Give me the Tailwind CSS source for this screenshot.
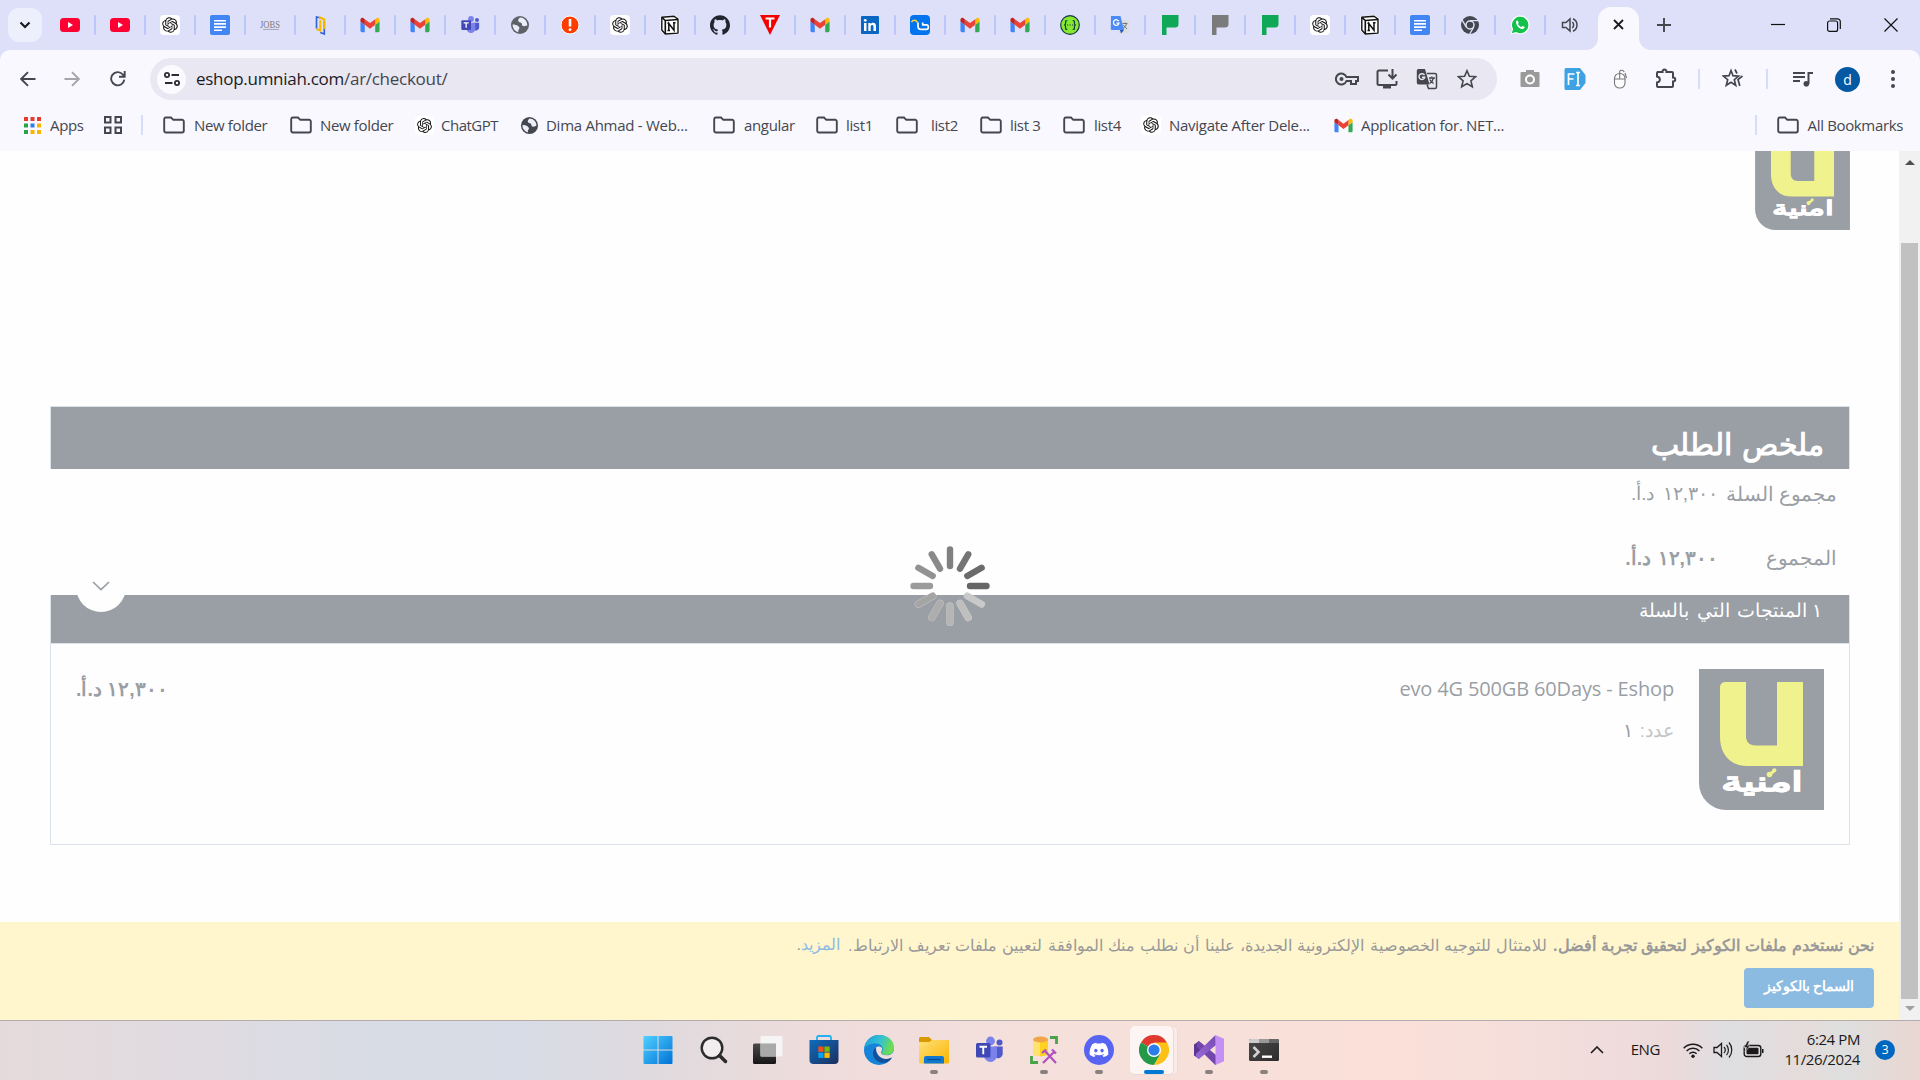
<!DOCTYPE html>
<html lang="en">
<head>
<meta charset="utf-8">
<title>eshop.umniah.com</title>
<script src="https://cdn.jsdelivr.net/npm/@tailwindcss/browser@4"></script>
</head>
<body class="w-[1920px] h-[1080px] overflow-hidden bg-white font-['Open_Sans',sans-serif]">
<svg class="absolute size-0" aria-hidden="true">
<defs>
<linearGradient id="gwin" x1="0" y1="0" x2="1" y2="1"><stop offset="0" stop-color="#4fd0ff"/><stop offset="1" stop-color="#0072d6"/></linearGradient>
<linearGradient id="gfold" x1="0" y1="0" x2="1" y2="1"><stop offset="0" stop-color="#ffe17a"/><stop offset="1" stop-color="#fbb400"/></linearGradient>
<linearGradient id="gdark" x1="0" y1="0" x2="0" y2="1"><stop offset="0" stop-color="#4a4a4a"/><stop offset="1" stop-color="#161616"/></linearGradient>
<linearGradient id="gterm" x1="0" y1="0" x2="1" y2="1"><stop offset="0" stop-color="#4a4a4a"/><stop offset="1" stop-color="#2c2c2c"/></linearGradient>
<linearGradient id="gstore" x1="0" y1="0" x2="1" y2="1"><stop offset="0" stop-color="#0f6cbd"/><stop offset="1" stop-color="#1b2f5f"/></linearGradient>
<linearGradient id="gedge" x1="0" y1="0" x2="1" y2="0.3"><stop offset="0" stop-color="#1b9de0"/><stop offset=".6" stop-color="#35c3cf"/><stop offset="1" stop-color="#6ddc4f"/></linearGradient>
<linearGradient id="gvs" x1="0" y1="1" x2="1" y2="0"><stop offset="0" stop-color="#9a6bd8"/><stop offset="1" stop-color="#7848b4"/></linearGradient>
</defs>
</svg>
<svg class="hidden" aria-hidden="true">
<symbol id="yt" viewBox="0 0 20 20"><rect x="0" y="3" width="20" height="14" rx="3.5" fill="#ff0033"/><path d="M8 7v6l5-3z" fill="#fff"/></symbol>
<symbol id="gpt" viewBox="0 0 20 20"><rect width="20" height="20" rx="4" fill="#fff"/><path transform="translate(2.2 2.2) scale(.65)" fill="#111" d="M22.2819 9.8211a5.9847 5.9847 0 0 0-.5157-4.9108 6.0462 6.0462 0 0 0-6.5098-2.9A6.0651 6.0651 0 0 0 4.9807 4.1818a5.9847 5.9847 0 0 0-3.9977 2.9 6.0462 6.0462 0 0 0 .7427 7.0966 5.98 5.98 0 0 0 .511 4.9107 6.051 6.051 0 0 0 6.5146 2.9001A5.9847 5.9847 0 0 0 13.2599 24a6.0557 6.0557 0 0 0 5.7718-4.2058 5.9894 5.9894 0 0 0 3.9977-2.9001 6.0557 6.0557 0 0 0-.7475-7.0729zm-9.022 12.6081a4.4755 4.4755 0 0 1-2.8764-1.0408l.1419-.0804 4.7783-2.7582a.7948.7948 0 0 0 .3927-.6813v-6.7369l2.02 1.1686a.071.071 0 0 1 .038.052v5.5826a4.504 4.504 0 0 1-4.4945 4.4944zm-9.6607-4.1254a4.4708 4.4708 0 0 1-.5346-3.0137l.142.0852 4.783 2.7582a.7712.7712 0 0 0 .7806 0l5.8428-3.3685v2.3324a.0804.0804 0 0 1-.0332.0615L9.74 19.9502a4.4992 4.4992 0 0 1-6.1408-1.6464zM2.3408 7.8956a4.485 4.485 0 0 1 2.3655-1.9728V11.6a.7664.7664 0 0 0 .3879.6765l5.8144 3.3543-2.0201 1.1685a.0757.0757 0 0 1-.071 0l-4.8303-2.7865A4.504 4.504 0 0 1 2.3408 7.872zm16.5963 3.8558L13.1038 8.364 15.1192 7.2a.0757.0757 0 0 1 .071 0l4.8303 2.7913a4.4944 4.4944 0 0 1-.6765 8.1042v-5.6772a.79.79 0 0 0-.407-.667zm2.0107-3.0231l-.142-.0852-4.7735-2.7818a.7759.7759 0 0 0-.7854 0L9.409 9.2297V6.8974a.0662.0662 0 0 1 .0284-.0615l4.8303-2.7866a4.4992 4.4992 0 0 1 6.6802 4.66zM8.3065 12.863l-2.02-1.1638a.0804.0804 0 0 1-.038-.0567V6.0742a4.4992 4.4992 0 0 1 7.3757-3.4537l-.142.0805L8.704 5.459a.7948.7948 0 0 0-.3927.6813zm1.0976-2.3654l2.602-1.4998 2.6069 1.4998v2.9994l-2.5974 1.4997-2.6067-1.4997Z"/></symbol>
<symbol id="docs" viewBox="0 0 20 20"><rect width="20" height="20" rx="2" fill="#4285f4"/><path d="M4 5.700h12M4 8.900h12M4 12.100h12M4 15.300h8" stroke="#fff" stroke-width="1.600"/></symbol>
<symbol id="jobs" viewBox="0 0 20 20"><text x="0" y="12.500" font-family="Liberation Serif" font-size="10" textLength="20" lengthAdjust="spacingAndGlyphs" fill="#7f7b7b">JOBS</text><path d="M3 14.500h16" stroke="#aaa7b8" stroke-width="1"/></symbol>
<symbol id="book" viewBox="0 0 20 20"><path d="M6.500 13.500V2L11 3" fill="none" stroke="#2f5fd0" stroke-width="1.600"/><path d="M14.300 6v13l-4-1.500" fill="none" stroke="#2f5fd0" stroke-width="1.600"/><path d="M6.500 14l3.800 1.500V5M9 2l5.300 2.500V14" fill="none" stroke="#f5b700" stroke-width="2"/></symbol>
<symbol id="gmail" viewBox="50 36 92 78"><path fill="#4285f4" d="M58 108h14V74L52 59v43c0 3.320 2.690 6 6 6"/><path fill="#34a853" d="M120 108h14c3.320 0 6-2.690 6-6V59l-20 15"/><path fill="#fbbc04" d="M120 48v26l20-15v-8c0-7.420-8.470-11.650-14.400-7.200"/><path fill="#ea4335" d="M72 74V48l24 18 24-18v26L96 92"/><path fill="#c5221f" d="M52 51v8l20 15V48l-5.600-4.200c-5.940-4.450-14.400-.220-14.400 7.200"/></symbol>
<symbol id="teams" viewBox="0 0 30 30"><circle cx="16.500" cy="6" r="4.400" fill="#7b83eb"/><circle cx="25.500" cy="7.500" r="3" fill="#5059c9"/><path d="M20 11.500h8.700v8a5 5 0 0 1-8.700 2z" fill="#5059c9"/><path d="M10 11.500h13v9a6.500 6.500 0 0 1-13 0z" fill="#7b83eb"/><rect x="2" y="8" width="14.500" height="14.500" rx="1.500" fill="#4048b5"/><path d="M5.500 11.800h7.500M9.250 11.800v7.400" stroke="#fff" stroke-width="1.900"/></symbol>
<symbol id="globe" viewBox="0 0 20 20"><circle cx="10" cy="10" r="9" fill="currentColor"/><path d="M10 2.500c-2 1.500-2.500 3.500-1 4.500 1.800.8 3 .5 3 2.500 0 1.500 1.500 2 2.800 1.500 1.600-.6 2.500 0 2.500-1A7.500 7.500 0 0 0 10 2.500zM2.600 9.500c2 0 4 .5 5.500 1.500 1.500 1.200 1.800 2.600.7 3.500-.8.800-.5 1.600-.3 2.800A7.500 7.500 0 0 1 2.600 9.500z" fill="#eceefb"/></symbol>
<symbol id="alert" viewBox="0 0 20 20"><circle cx="10" cy="10" r="9" fill="#ff3d00" stroke="#fff" stroke-width="1"/><path d="M10 4v7.500" stroke="#fff" stroke-width="2.600"/><circle cx="10" cy="14.700" r="1.400" fill="#fff"/></symbol>
<symbol id="notion" viewBox="0 0 20 20"><path d="M.5 1.500L14 0l5.500 3.500V19L5 20 .5 15.500z" fill="#fff"/><path d="M1.800 2.300L14 1.300l4 2.800v14L5.300 19l-3.500-4z" fill="#fff" stroke="#111" stroke-width="1.400" stroke-linejoin="round"/><path d="M1.800 2.300L5.300 5.500 18 4.500M5.300 5v14" fill="none" stroke="#111" stroke-width="1.600"/><path d="M8.800 15.300V8.500l5.200 6.800V7.800M7.500 8.300h2M13 7.800h2.500M7.500 15.500h2.500" fill="none" stroke="#111" stroke-width="1.500"/></symbol>
<symbol id="github" viewBox="0 0 24 24"><path fill="#20262e" d="M12 .297c-6.630 0-12 5.373-12 12 0 5.303 3.438 9.800 8.205 11.385.6.113.820-.258.820-.577 0-.285-.010-1.040-.015-2.040-3.338.724-4.042-1.610-4.042-1.610C4.422 18.070 3.633 17.700 3.633 17.700c-1.087-.744.084-.729.084-.729 1.205.084 1.838 1.236 1.838 1.236 1.070 1.835 2.809 1.305 3.495.998.108-.776.417-1.305.760-1.605-2.665-.3-5.466-1.332-5.466-5.930 0-1.310.465-2.380 1.235-3.220-.135-.303-.540-1.523.105-3.176 0 0 1.005-.322 3.300 1.230.960-.267 1.980-.399 3-.405 1.020.006 2.040.138 3 .405 2.280-1.552 3.285-1.230 3.285-1.230.645 1.653.240 2.873.120 3.176.765.840 1.230 1.910 1.230 3.220 0 4.610-2.805 5.625-5.475 5.920.420.360.810 1.096.810 2.220 0 1.606-.015 2.896-.015 3.286 0 .315.210.690.825.570C20.565 22.092 24 17.592 24 12.297c0-6.627-5.373-12-12-12"/></symbol>
<symbol id="tri" viewBox="0 0 20 20"><path d="M0 0h20L10 20z" fill="#f40000"/><path d="M5.500 3.500h9M10 3.500v9" stroke="#fff" stroke-width="2.200"/></symbol>
<symbol id="linkedin" viewBox="0 0 20 20"><rect x="1" y="1" width="18" height="18" rx="1" fill="#0a66c2"/><path d="M4 8h2.500v8H4zM8.300 8h2.300v1.200C11 8.400 12 7.800 13 7.800c2.400 0 3 1.500 3 3.700V16h-2.500v-4c0-1-.1-2.100-1.300-2.100S10.700 11 10.700 12v4H8.300z" fill="#fff"/><circle cx="5.250" cy="5.300" r="1.400" fill="#fff"/></symbol>
<symbol id="wave" viewBox="0 0 20 20"><rect width="20" height="20" rx="4" fill="#0073ee"/><path d="M1.500 7c2-2.500 4-2 6 .2" fill="none" stroke="#ffd43b" stroke-width="1.500"/><path d="M8 7.500v4c0 1.800 1 2.800 2.800 2.800h5.700a1.800 1.800 0 0 0 1.800-1.800v-.8a1.800 1.800 0 0 0-1.800-1.800h-3.800V7.500" fill="none" stroke="#fff" stroke-width="1.700"/></symbol>
<symbol id="swagger" viewBox="0 0 20 20"><circle cx="10" cy="10" r="9.300" fill="#85ea2d" stroke="#173647" stroke-width="1.200"/><path d="M7.300 5.500c-2 0-1.800 1-1.700 2.500.1 1.200-.3 1.900-1.400 2 1.100.1 1.500.8 1.400 2-.1 1.500-.3 2.500 1.700 2.500M12.700 5.500c2 0 1.800 1 1.700 2.500-.1 1.200.3 1.900 1.400 2-1.100.1-1.500.8-1.400 2 .1 1.500.3 2.500-1.700 2.500M7 10h1.200M9.500 10h1.200M12 10h1.200" fill="none" stroke="#173647" stroke-width="1.200"/></symbol>
<symbol id="gtr" viewBox="0 0 20 20"><rect x="8" y="5" width="11" height="13.500" rx="1" fill="#dcdde2"/><path d="M1 1h9.500l3.500 14H2a1.200 1.200 0 0 1-1.200-1.200z" fill="#4c8bf5"/><path d="M10 15h4l-3 3.500z" fill="#2b50b5"/><path d="M8.800 6.300A2.800 2.800 0 1 0 9 8.200H6.400" fill="none" stroke="#fff" stroke-width="1.300"/><path d="M12.500 8.500h5M15 7.500v1M16.500 8.500c-.5 2.500-2 4-3.500 5M13.500 10c.7 1.500 2 3 3.500 3.800" fill="none" stroke="#6f7680" stroke-width="1"/></symbol>
<symbol id="pflag" viewBox="0 0 20 20"><path d="M2 0h16.500v9a3.500 3.500 0 0 1-3.500 3.500H6.500V20H2z" fill="currentColor"/></symbol>
<symbol id="chromebw" viewBox="0 0 20 20"><circle cx="10" cy="10" r="9" fill="#44474e"/><circle cx="10" cy="10" r="4" fill="#44474e" stroke="#dfe0fa" stroke-width="1.500"/><path d="M10 5.700h8.200M6.300 12.200L2.200 5.200M13.700 12.200L9.700 19" stroke="#dfe0fa" stroke-width="1.300"/></symbol>
<symbol id="wa" viewBox="0 0 20 20"><path d="M.5 19.500l1.700-5A9.400 9.400 0 1 1 5.700 18z" fill="#fff"/><path d="M1.800 18.300l1.300-4.200A8.200 8.200 0 1 1 6 17z" fill="#12c24b"/><path d="M6.400 5.700c.6-.5 1.200-.4 1.500.2l.8 1.600c.2.500-.7 1.100-.7 1.400.7 1.400 1.900 2.500 3.300 3 .4 0 1-1.100 1.500-.9l1.500.8c.6.4.3 1.300-.3 1.800-3 2.200-9.500-3.700-7.600-7.900z" fill="#fff"/></symbol>
<symbol id="spk" viewBox="0 0 20 20"><path d="M2.500 7.500H6l4-3.500v12l-4-3.500H2.500z" fill="none" stroke="#44474e" stroke-width="1.500"/><path d="M12.300 7a4 4 0 0 1 0 6M13 3.800a6.800 6.800 0 0 1 0 12.400" fill="none" stroke="#44474e" stroke-width="1.500"/></symbol>
<symbol id="folder" viewBox="0 0 22 18"><path d="M1.200 3A1.700 1.700 0 0 1 2.900 1.500H8l2.300 2.300h8.800A1.700 1.700 0 0 1 20.800 5.500v9.300a1.700 1.700 0 0 1-1.700 1.700H2.900a1.700 1.700 0 0 1-1.700-1.700z" fill="none" stroke="#44474e" stroke-width="1.900"/></symbol>
<symbol id="star" viewBox="0 0 20 20"><path d="M10 1.700l2.400 5.600 6.100.5-4.600 4 1.400 6-5.300-3.200-5.300 3.200 1.400-6-4.600-4 6.100-.5z" fill="none" stroke="currentColor" stroke-width="1.600" stroke-linejoin="miter"/></symbol>
<symbol id="ulogo" viewBox="0 0 125 141">
<path d="M0 0h125v141H27a27 27 0 0 1-27-27z" fill="#9a9ea5"/>
<path d="M26 13h21v54c0 6 3.500 9.500 9.500 9.500H78V13h26v84H48c-16 0-27-11-27-29V18a5 5 0 0 1 5-5z" fill="#f0f28e"/>
<text x="105" y="121.500" direction="rtl" font-family="sans-serif" font-weight="700" font-size="27" fill="#fff" stroke="#fff" stroke-width=".6" textLength="83" lengthAdjust="spacingAndGlyphs">امنية</text>
<path d="M70 106l5-4" stroke="#f0f28e" stroke-width="3"/><circle cx="70.500" cy="105.500" r="2.800" fill="#f0f28e"/><circle cx="75.300" cy="101.300" r="2.100" fill="#f0f28e"/>
</symbol>
</svg>

<!-- Tab strip -->
<header class="flex h-[50px] bg-[#dee0fa]">
  <div class="flex w-[46px] shrink-0 items-center pl-2">
    <div class="flex h-[34px] w-[34px] items-center justify-center rounded-[11px] bg-[#eeeffd]"><svg class="size-4" viewBox="0 0 16 16"><path d="M3.500 5.500L8 10l4.500-4.500" fill="none" stroke="#1b1b1f" stroke-width="2.200"/></svg></div>
  </div>
  <div id="tabs" class="flex w-[1552px] shrink-0"></div>
  <div class="relative mt-[7px] flex h-[43px] w-[41px] items-center justify-center rounded-t-[13px] bg-[#f9f8fe] pb-2">
    <svg class="absolute bottom-0 -left-3 size-3" viewBox="0 0 12 12"><path d="M12 0v12H0A12 12 0 0 0 12 0z" fill="#f9f8fe"/></svg>
    <svg class="absolute bottom-0 -right-3 size-3" viewBox="0 0 12 12"><path d="M0 0v12h12A12 12 0 0 1 0 0z" fill="#f9f8fe"/></svg>
    <svg class="size-[11px]" viewBox="0 0 11 11"><path d="M1 1l9 9M10 1l-9 9" stroke="#1b1b1f" stroke-width="1.800"/></svg>
  </div>
  <div class="flex w-[49px] items-center justify-center"><svg class="size-[14px]" viewBox="0 0 14 14"><path d="M7 0v14M0 7h14" stroke="#44474e" stroke-width="1.900"/></svg></div>
  <div class="ml-auto flex items-center">
    <div class="flex w-14 justify-center"><svg class="h-[14px] w-[14px]" viewBox="0 0 14 14"><path d="M0 6.500h14" stroke="#111" stroke-width="1.200"/></svg></div>
    <div class="flex w-14 justify-center"><svg class="h-[14px] w-[14px]" viewBox="0 0 14 14"><rect x=".6" y="3" width="10" height="10.400" rx="2" fill="none" stroke="#111" stroke-width="1.200"/><path d="M3 .8h7.500a2.800 2.800 0 0 1 2.800 2.800V11" fill="none" stroke="#111" stroke-width="1.200"/></svg></div>
    <div class="flex w-[58px] justify-center"><svg class="size-[14px]" viewBox="0 0 14 14"><path d="M.5.5l13 13M13.500.5l-13 13" stroke="#111" stroke-width="1.200"/></svg></div>
  </div>
</header>

<!-- Toolbar -->
<div class="bg-[#dee0fa]">
<div class="flex h-[58px] items-center rounded-t-[10px] bg-[#f9f8fe]">
  <div class="flex w-[45px] justify-center pl-[10px]"><svg class="size-4" viewBox="0 0 16 16"><path d="M15.500 8H1.500M8 1.200L1.200 8 8 14.800" fill="none" stroke="#44474e" stroke-width="1.900"/></svg></div>
  <div class="flex w-[50px] justify-center pl-1"><svg class="size-4" viewBox="0 0 16 16"><path d="M.5 8h14M8 1.200L14.800 8 8 14.800" fill="none" stroke="#a5a6ac" stroke-width="1.900"/></svg></div>
  <div class="flex w-[45px] justify-center"><svg class="size-4" viewBox="0 0 16 16"><path d="M14.300 8.700A6.600 6.600 0 1 1 12.800 3.500L14.500 5.300M14.700 0v5.700H9" fill="none" stroke="#44474e" stroke-width="1.900"/></svg></div>
  <div class="ml-[10px] flex h-[42px] w-[1347px] items-center rounded-full bg-[#e9e7f1] pr-[10px] pl-[7px]">
    <div class="flex size-[29px] items-center justify-center rounded-full bg-[#fbfaff]"><svg class="size-4" viewBox="0 0 16 16"><g fill="none" stroke="#2c2d33" stroke-width="1.800"><circle cx="3" cy="4" r="2.100"/><path d="M7.500 4H15M1 12h7.500"/><circle cx="13" cy="12" r="2.100"/></g></svg></div>
    <div class="ml-[10px] text-[17px] tracking-[-0.28px] text-[#1b1b1f]">eshop.umniah.com<span class="text-[#44464f]">/ar/checkout/</span></div>
    <div class="ml-auto flex text-[#44474e]">
      <div class="flex w-10 items-center justify-center"><svg class="h-[14px] w-6" viewBox="0 0 24 14"><g fill="none" stroke="#44474e" stroke-width="2"><path d="M11.500 5H23v4h-2v3h-5V9h-4.500A5.500 5.500 0 1 1 11.500 5z"/></g><circle cx="6.500" cy="7" r="2" fill="#44474e"/></svg></div>
      <div class="flex w-10 items-center justify-center"><svg class="size-[22px]" viewBox="0 0 22 22"><path d="M12 2.500H3A1.500 1.500 0 0 0 1.500 4v11.500A1.500 1.500 0 0 0 3 17h16a1.500 1.500 0 0 0 1.500-1.500V13M16.500 1v9M12.500 6.500l4 4 4-4" fill="none" stroke="#44474e" stroke-width="2"/><path d="M7 17h8v3.500H7z" fill="#44474e"/></svg></div>
      <div class="flex w-10 items-center justify-center"><svg class="size-[22px]" viewBox="0 0 22 22"><path d="M2.500 1H9l4.500 15.500h-11A1.800 1.800 0 0 1 .8 14.700V2.800A1.800 1.800 0 0 1 2.500 1z" fill="#44474e"/><path d="M11 5.500h8a1.500 1.500 0 0 1 1.500 1.500v12a1.500 1.500 0 0 1-1.500 1.500h-6.500L11 16.500" fill="none" stroke="#44474e" stroke-width="1.500"/><path d="M8.500 7.200A2.900 2.900 0 1 0 8.800 9.200H6" fill="none" stroke="#e9e7f1" stroke-width="1.400"/><path d="M13 10h6M15.800 8.500V10M17.500 10c-.5 2.500-2 4.200-4 5.500M13.800 11.500c.8 1.700 2 3 3.800 4" fill="none" stroke="#44474e" stroke-width="1.300"/></svg></div>
      <div class="flex w-10 items-center justify-center"><svg class="size-5"><use href="#star"/></svg></div>
    </div>
  </div>
  <div class="ml-[10px] flex text-[#44474e]">
    <div class="flex w-[45px] items-center justify-center"><svg class="size-5" viewBox="0 0 20 20"><path d="M6 3V1h8v2h4.500a1 1 0 0 1 1 1v13a1 1 0 0 1-1 1h-17a1 1 0 0 1-1-1V4a1 1 0 0 1 1-1z" fill="#9a9a9a"/><circle cx="10" cy="10.500" r="4" fill="#9a9a9a" stroke="#fff" stroke-width="2"/></svg></div>
    <div class="flex w-[45px] items-center justify-center"><svg class="h-[22px] w-[22px]" viewBox="0 0 22 22"><path d="M2 0h14l5.500 7v8L16 22H2a1.500 1.500 0 0 1-1.500-1.500v-19A1.500 1.500 0 0 1 2 0z" fill="#3fa2e2"/><path d="M4.500 17V6h6M4.500 11h5M14 5v12M12 4.500h4M12 17.500h4" fill="none" stroke="#fff" stroke-width="1.700"/></svg></div>
    <div class="flex w-[45px] items-center justify-center"><svg class="size-5" viewBox="0 0 20 20"><rect x="4.500" y="4.500" width="10.500" height="14.500" rx="5" fill="#fff" stroke="#777" stroke-width="1.100"/><path d="M4.500 10H15M9.700 10V2.500c0-2 4-1.500 4.500.5M15 4l1.500 5" fill="none" stroke="#777" stroke-width="1.100"/></svg></div>
    <div class="flex w-[47px] items-center justify-center"><svg class="size-[22px]" viewBox="0 0 22 22"><path d="M2 4h5.500C7 .8 12 .8 11.500 4H17a1 1 0 0 1 1 1v4.500c3 0 3 4 0 4V18a1 1 0 0 1-1 1H3a1 1 0 0 1-1-1v-3.500c3.800-.5 3.800-5.500 0-6V5a1 1 0 0 1 1-1z" fill="none" stroke="#44474e" stroke-width="2"/></svg></div>
  </div>
  <div class="ml-[9px] h-5 w-[2px] bg-[#d6ddfb]"></div>
  <div class="flex w-[66px] justify-center text-[#44474e]"><svg class="size-[22px]" viewBox="0 0 22 22"><path d="M9 2.500l2 5.200 5.500.4-4.200 3.600 1.400 5.600L9 14.200l-4.700 3.100 1.400-5.600L1.500 8.100l5.500-.4z" fill="none" stroke="#44474e" stroke-width="1.700"/><path d="M13 1.500l2 4M20.500 8l-4.500 3.500 1.800 6.500" fill="none" stroke="#44474e" stroke-width="1.700"/></svg></div>
  <div class="h-5 w-[2px] bg-[#d6ddfb]"></div>
  <div class="flex w-[67px] justify-center pl-[2px]"><svg class="h-4 w-5" viewBox="0 0 20 16"><path d="M0 2h12M0 6h12M0 10h7" stroke="#44474e" stroke-width="2"/><path d="M15.500 13V2H20" fill="none" stroke="#44474e" stroke-width="2"/><circle cx="13.300" cy="12.700" r="2.800" fill="#44474e"/></svg></div>
  <div class="flex size-[25px] items-center justify-center rounded-full bg-[#0459a4] text-[14px] text-white">d</div>
  <div class="flex flex-1 justify-center pl-[5px]"><svg class="h-[18px] w-1" viewBox="0 0 4 18"><g fill="#44474e"><circle cx="2" cy="2" r="2"/><circle cx="2" cy="9" r="2"/><circle cx="2" cy="16" r="2"/></g></svg></div>
</div>
</div>

<!-- Bookmarks bar -->
<nav class="flex h-[43px] items-center bg-[#f9f8fe] pb-[9px] text-[15px] tracking-[-0.35px] whitespace-nowrap text-[#44474e] *:leading-[20px]">
  <div class="flex w-[80px] items-center gap-[9px] pl-6 "><svg class="size-[17px] shrink-0" viewBox="0 0 17 17"><g fill="#e8392d"><path d="M0 0h4v4H0zM6.500 0h4v4h-4zM13 0h4v4h-4z"/></g><path fill="#2aa24c" d="M0 6.500h4v4H0zM0 13h4v4H0z"/><path fill="#2b7de9" d="M6.500 6.500h4v4h-4z"/><path fill="#fbb400" d="M13 6.500h4v4h-4zM6.500 13h4v4h-4zM13 13h4v4h-4z"/></svg><span>Apps</span></div>
  <svg class="ml-6 size-[18px]" viewBox="0 0 18 18"><path d="M1 1h5.500v5.500H1zM11.500 1H17v5.500h-5.500zM1 11.500h5.500V17H1zM11.500 11.500H17V17h-5.500z" fill="none" stroke="#44474e" stroke-width="2"/></svg>
  <div class="ml-[19px] h-5 w-[2px] bg-[#d6ddfb]"></div>
  <div class="ml-5 flex w-[127px] items-center gap-[9px]"><svg class="h-[18px] w-[22px]"><use href="#folder"/></svg>New folder</div>
  <div class="flex w-[125px] items-center gap-[8px]"><svg class="h-[18px] w-[22px]"><use href="#folder"/></svg>New folder</div>
  <div class="flex w-[105px] items-center gap-[7px]"><svg class="size-[19px]"><use href="#gpt"/></svg><span class="tracking-[-0.5px]">ChatGPT</span></div>
  <div class="flex w-[193px] items-center gap-[7px] tracking-[-0.27px]"><svg class="size-[19px]"><use href="#globe"/></svg>Dima Ahmad - Web...</div>
  <div class="flex w-[103px] items-center gap-[9px]"><svg class="h-[18px] w-[22px]"><use href="#folder"/></svg>angular</div>
  <div class="flex w-[80px] items-center gap-[8px]"><svg class="h-[18px] w-[22px]"><use href="#folder"/></svg>list1</div>
  <div class="flex w-[84px] items-center gap-[13px]"><svg class="h-[18px] w-[22px]"><use href="#folder"/></svg>list2</div>
  <div class="flex w-[83px] items-center gap-[8px]"><svg class="h-[18px] w-[22px]"><use href="#folder"/></svg>list 3</div>
  <div class="flex w-[78px] items-center gap-[9px]"><svg class="h-[18px] w-[22px]"><use href="#folder"/></svg>list4</div>
  <div class="flex w-[193px] items-center gap-[8px] tracking-[-0.27px]"><svg class="size-[20px]"><use href="#gpt"/></svg>Navigate After Dele...</div>
  <div class="flex items-center gap-[8px] tracking-[-0.3px]"><svg class="size-[19px]"><use href="#gmail"/></svg>Application for. NET...</div>
  <div class="ml-auto h-5 w-[2px] bg-[#d6ddfb]"></div>
  <div class="ml-5 flex items-center gap-[9px] pr-[17px]"><svg class="h-[18px] w-[22px]"><use href="#folder"/></svg>All Bookmarks</div>
</nav>

<!-- Page viewport -->
<div class="flex h-[869px]">
  <main dir="rtl" class="relative h-full w-[1899px] overflow-hidden bg-[#fefefe] font-[sans-serif] text-[#9a9ea5]">
    <div class="h-[79px] overflow-hidden pr-[49px]"><svg class="-mt-[28px] h-[107px] w-[95px]"><use href="#ulogo"/></svg></div>
    <section class="mr-[49px] mt-[176px] w-[1800px]">
      <h1 class="flex h-[63px] items-end border border-b-0 border-[#dbe2ea] bg-[#9a9ea5] pr-[25px] pb-[4px] text-[29.800px] leading-[40px] font-bold whitespace-nowrap text-white [word-spacing:2px]">ملخص الطلب</h1>
      <div class="flex h-[63px] items-start pt-[10px] pr-[13px] text-[19.500px] leading-[30px]"><span class="w-[108px] whitespace-nowrap">مجموع السلة</span><span class="mr-[11px] text-[19px] whitespace-nowrap [word-spacing:3px]">١٢,٣٠٠ د.أ.</span></div>
      <div class="flex h-[63px] items-start pt-[11px] pr-[13px] text-[19.500px] leading-[30px]"><span class="w-[108px]">المجموع</span><span class="mr-[11px] text-[19.500px] font-bold whitespace-nowrap [word-spacing:1px]">١٢,٣٠٠ د.أ.</span></div>
      <div class="relative h-[49px] border-x border-b border-[#dbe2ea] bg-[#9a9ea5] pt-px pr-[27px] text-[19.200px] leading-[30px] text-white"><span>١</span><span class="mr-[5px] [word-spacing:2px]">المنتجات التي بالسلة</span>
        <div class="absolute -top-[33px] left-[25px] flex size-[50px] items-center justify-center rounded-full bg-[#fefefe]"><svg class="mt-[-2px] h-[10px] w-[18px]" viewBox="0 0 18 10"><path d="M1 1l8 7.500L17 1" fill="none" stroke="#9a9ea5" stroke-width="1.700"/></svg></div>
      </div>
      <div class="flex h-[201px] border border-t-0 border-[#dbe2ea] pt-[25px] pr-[25px] pl-[25px]">
        <svg class="h-[141px] w-[125px]"><use href="#ulogo"/></svg>
        <div class="mr-[25px] pt-[6px]">
          <div dir="ltr" class="font-['Open_Sans'] text-[20px] leading-[28px] tracking-[-0.15px]">evo 4G 500GB 60Days - Eshop</div>
          <div class="mt-[14px] text-[18.500px] leading-[28px]"><span class="text-[#c4c4c4]">عدد:</span><span class="mr-[7px]">١</span></div>
        </div>
        <div class="mr-auto pt-[6px] text-[19.500px] leading-[28px] font-bold">١٢,٣٠٠ د.أ.</div>
      </div>
    </section>
    <footer class="mt-[77px] h-[98px] bg-[#fff6ce] pt-[11px] pr-[25px] text-[16px] leading-[24px] text-[#999999]">
      <p class="flex h-6 gap-[6px] whitespace-nowrap"><strong class="text-[16.200px] [word-spacing:0.4px]">نحن نستخدم ملفات الكوكيز لتحقيق تجربة أفضل.</strong><span class="text-[16.450px] [word-spacing:0.7px]">للامتثال للتوجيه الخصوصية الإلكترونية الجديدة، علينا أن نطلب منك الموافقة لتعيين ملفات تعريف الارتباط.</span><span class="mr-[2px]"><span class="text-[#8cbbe2]">المزيد</span>.</span></p>
      <div class="mt-[11px] flex h-10 w-[130px] items-center justify-center rounded-[4px] bg-[#8cbbe2] pb-[2px] text-[13.800px] font-bold whitespace-nowrap text-white">السماح بالكوكيز</div>
    </footer>
    <svg class="absolute top-[395px] left-[910px] size-20" viewBox="-40 -40 80 80"><g stroke-width="6.400" stroke-linecap="round">
      <path d="M20 0h16.500" stroke="#666"/><path d="M20 0h16.500" stroke="#6b6b6b" transform="rotate(-30)"/><path d="M20 0h16.500" stroke="#747474" transform="rotate(-60)"/><path d="M20 0h16.500" stroke="#808080" transform="rotate(-90)"/><path d="M20 0h16.500" stroke="#8a8a8a" transform="rotate(-120)"/><path d="M20 0h16.500" stroke="#929292" transform="rotate(-150)"/><path d="M20 0h16.500" stroke="#9b9b9b" transform="rotate(180)"/><path d="M20 0h16.500" stroke="#c4c4c4" stroke-width="7.400" transform="rotate(150)"/><path d="M20 0h16.500" stroke="#a5a5a5" transform="rotate(150)"/><path d="M20 0h16.500" stroke="#c4c4c4" stroke-width="7.400" transform="rotate(120)"/><path d="M20 0h16.500" stroke="#adadad" transform="rotate(120)"/><path d="M20 0h16.500" stroke="#c8c8c8" stroke-width="7.400" transform="rotate(90)"/><path d="M20 0h16.500" stroke="#b6b6b6" transform="rotate(90)"/><path d="M20 0h16.500" stroke="#cdcdcd" stroke-width="7.400" transform="rotate(60)"/><path d="M20 0h16.500" stroke="#bfbfbf" transform="rotate(60)"/><path d="M20 0h16.500" stroke="#c9c9c9" stroke-width="7" transform="rotate(30)"/></g></svg>
  </main>
  <aside class="flex w-[21px] flex-col items-center bg-[#f1f1f1]">
    <svg class="mt-[9px] h-[5px] w-[10px]" viewBox="0 0 10 5"><path d="M5 0l5 5H0z" fill="#505050"/></svg>
    <div class="mt-[78px] h-[756px] w-[17px] bg-[#c1c1c1]"></div>
    <svg class="mt-[7px] h-[5px] w-[10px]" viewBox="0 0 10 5"><path d="M0 0h10L5 5z" fill="#a0a0a0"/></svg>
  </aside>
</div>

<!-- Taskbar -->
<div class="h-[60px] border-t border-[#b3acb0]">
 <div class="flex h-full w-full bg-[linear-gradient(90deg,#e5dadb_0%,#dfdbe1_11%,#d9dce5_18%,#d8dce6_27%,#dfdade_34%,#eedcdc_42%,#f5e0db_55%,#f8e0da_64%,#fbe0d9_73%,#f4dedb_80%,#ecdadb_87%,#dedee1_90%,#e5dcdb_94%,#dedfdf_96%,#ead6d1_100%)]">
  <div class="ml-[630px] flex pb-px">
    <div class="flex w-[55px] items-center justify-center"><svg class="size-[30px]" viewBox="0 0 30 30"><path d="M.5 2a1 1 0 0 1 1-1h13v13.500H.5zM15.500 1h13a1 1 0 0 1 1 1v12.500h-14zM.5 15.500h14V29h-13a1 1 0 0 1-1-1zM15.500 15.500h14V28a1 1 0 0 1-1 1h-13z" fill="url(#gwin)"/></svg></div>
    <div class="flex w-[55px] items-center justify-center pl-[2px]"><svg class="size-[28px]" viewBox="0 0 28 28"><circle cx="12" cy="12" r="10.300" fill="#f1ecee" stroke="#2b2b2b" stroke-width="2.400"/><path d="M19.500 19.500l6 6" stroke="#2b2b2b" stroke-width="3.500" stroke-linecap="round"/></svg></div>
    <div class="flex w-[56px] items-center justify-center"><svg class="size-[30px]" viewBox="0 0 30 30"><rect x="0" y="8.500" width="23" height="20.500" rx="1.500" fill="url(#gdark)"/><rect x="7.500" y="1" width="22" height="20.500" rx="1.500" fill="#f7f7f7" fill-opacity=".9"/><path d="M7.500 8.500H23v13H7.500z" fill="#a9a9a9"/></svg></div>
    <div class="flex w-[55px] items-center justify-center"><svg class="size-[30px]" viewBox="0 0 30 30"><path d="M8 7V2.500A1.500 1.500 0 0 1 9.500 1h11A1.500 1.500 0 0 1 22 2.500V7" fill="none" stroke="#22b3ee" stroke-width="1.800"/><path d="M.5 5h29v20a4 4 0 0 1-4 4h-21a4 4 0 0 1-4-4z" fill="url(#gstore)"/><path fill="#f25022" d="M9.300 11.500h5.300v5.300H9.300z"/><path fill="#7fba00" d="M15.400 11.500h5.300v5.300h-5.300z"/><path fill="#00a4ef" d="M9.300 17.600h5.300v5.300H9.300z"/><path fill="#ffb900" d="M15.400 17.600h5.300v5.300h-5.300z"/></svg></div>
    <div class="flex w-[55px] items-center justify-center"><svg class="size-[30px]" viewBox="0 0 30 30"><circle cx="15" cy="15" r="15" fill="#1583d8"/><path d="M0 14C1 5.500 7.500 0 15.500 0 24 0 30 6 30 12.500c0 5-3.500 7.500-7.500 7.500-3 0-5.500-1-5-2.500.5-1 1.300-1.600 1.300-3.500 0-3-3-5.500-7-5.500C6 8.500 2 10.500 0 14z" fill="url(#gedge)"/><path d="M11.500 12.500c-3 3-3.500 8 0 12 3 3.200 8 4.300 12 2.500 2-1 4-3 5-5.500-3.500 2-8.500 2-12-.5-3-2-4.500-5-5-8.500z" fill="#12509c"/><path d="M12 12.500c1.500-1.500 5-1.500 6 .8.600 1.700-.8 3.200-1 4.200-.1 1.500 2 2.800 5.500 2.800 4 0 7-2 7.500-6V21c-.5 1-.5 1.200-1.500 2.500 0-.8-.8-1-2-.5-4.200 1.700-8.300 1-11-1.500-2.200-2-3.800-5.400-3.500-9z" fill="#f0dcdc"/></svg></div>
    <div class="relative flex w-[55px] items-center justify-center"><svg class="size-[30px]" viewBox="0 0 30 30"><path d="M0 3.500A1.500 1.500 0 0 1 1.500 2H10l3 3v5H0z" fill="#d99a00"/><path d="M0 7h10.500l2.500-2h17v22a1.500 1.500 0 0 1-1.500 1.500h-27A1.500 1.500 0 0 1 0 27z" fill="url(#gfold)"/><path d="M5 28.500V23a2 2 0 0 1 2-2h16a2 2 0 0 1 2 2v5.500z" fill="#0f78d0"/><path d="M8.500 24.500h13" stroke="#0a4c94" stroke-width="1.300"/></svg><i class="absolute bottom-[5px] h-1 w-2 rounded-full bg-[#8b8080]"></i></div>
    <div class="flex w-[55px] items-center justify-center"><svg class="size-[30px]"><use href="#teams"/></svg></div>
    <div class="relative flex w-[55px] items-center justify-center"><svg class="size-[30px]" viewBox="0 0 30 30"><path d="M4 4h15v13a7.500 3 0 0 1-15 2z" fill="#ffd21f"/><path d="M4 4h7v17c-4 0-7-1-7-2.500z" fill="#ffe36b"/><ellipse cx="11.500" cy="4.500" rx="7.500" ry="3" fill="#f0a54a"/><path d="M21 2.500h6.500V9M2.500 21v6.500H9" fill="none" stroke="#47a447" stroke-width="2.800"/><path d="M14 28l12-12M16 16l11 12M13 18l4-3.500M23 14.500l4 4" fill="none" stroke="#b04fc0" stroke-width="2.200"/></svg><i class="absolute bottom-[5px] h-1 w-2 rounded-full bg-[#8b8080]"></i></div>
    <div class="relative flex w-[55px] items-center justify-center"><svg class="size-[30px]" viewBox="0 0 30 30"><circle cx="15" cy="15" r="15" fill="#5865f2"/><path transform="translate(5.600 5.500) scale(.78)" fill="#fff" d="M20.317 4.3698a19.7913 19.7913 0 00-4.8851-1.5152.0741.0741 0 00-.0785.0371c-.211.3753-.4447.8648-.6083 1.2495-1.8447-.2762-3.68-.2762-5.4868 0-.1636-.3933-.4058-.8742-.6177-1.2495a.077.077 0 00-.0785-.037 19.7363 19.7363 0 00-4.8852 1.515.0699.0699 0 00-.0321.0277C.5334 9.0458-.319 13.5799.0992 18.0578a.0824.0824 0 00.0312.0561c2.0528 1.5076 4.0413 2.4228 5.9929 3.0294a.0777.0777 0 00.0842-.0276c.4616-.6304.8731-1.2952 1.226-1.9942a.076.076 0 00-.0416-.1057c-.6528-.2476-1.2743-.5495-1.8722-.8923a.077.077 0 01-.0076-.1277c.1258-.0943.2517-.1923.3718-.2914a.0743.0743 0 01.0776-.0105c3.9278 1.7933 8.18 1.7933 12.0614 0a.0739.0739 0 01.0785.0095c.1202.099.246.1981.3728.2924a.077.077 0 01-.0066.1276 12.2986 12.2986 0 01-1.873.8914.0766.0766 0 00-.0407.1067c.3604.698.7719 1.3628 1.225 1.9932a.076.076 0 00.0842.0286c1.961-.6067 3.9495-1.5219 6.0023-3.0294a.077.077 0 00.0313-.0552c.5004-5.177-.8382-9.6739-3.5485-13.6604a.061.061 0 00-.0312-.0286zM8.02 15.3312c-1.1825 0-2.1569-1.0857-2.1569-2.419 0-1.3332.9555-2.4189 2.157-2.4189 1.2108 0 2.1757 1.0952 2.1568 2.419 0 1.3332-.9555 2.4189-2.1569 2.4189zm7.9748 0c-1.1825 0-2.1569-1.0857-2.1569-2.419 0-1.3332.9554-2.4189 2.1569-2.4189 1.2108 0 2.1757 1.0952 2.1568 2.419 0 1.3332-.946 2.4189-2.1568 2.4189Z"/></svg><i class="absolute bottom-[5px] h-1 w-2 rounded-full bg-[#8b8080]"></i></div>
    <div class="relative flex w-[55px] items-center justify-center"><span class="absolute top-[5px] left-[4px] h-[49px] w-[48px] rounded-[5px] border border-[#eedcd8] bg-[#fbece9]"></span><span class="absolute top-[5px] left-[4px] h-[49px] w-[44px] rounded-[5px] border-r border-b border-[#e9d8d4] bg-[#fdf5f3]"></span><svg class="relative size-[30px]" viewBox="0 0 30 30"><path d="M15 15L2 7.500A15 15 0 0 1 28 7.500z" fill="#e0392d"/><path d="M15 15L2 7.500A15 15 0 0 0 15 30l6.500-11z" fill="#249a48"/><path d="M15 15l6.500 3.700L15 30A15 15 0 0 0 28 7.500H15z" fill="#fbc116"/><circle cx="15" cy="15" r="7" fill="#fff"/><circle cx="15" cy="15" r="5.600" fill="#2b7de9"/></svg><i class="absolute bottom-[5px] h-1 w-5 rounded-full bg-[#0078d4]"></i></div>
    <div class="relative flex w-[55px] items-center justify-center"><svg class="size-[30px]" viewBox="0 0 30 30"><path d="M0 9.500L5 6v7l3.500 3L5 18.500V24l-5-3.500z" fill="#5d3693"/><path d="M5 6l17 14v10l-1-.3L3 12V7.500z" fill="#7446ad"/><path d="M21.500 0L22 10 5 24l-3-2.500V19z" fill="url(#gvs)"/><path d="M21.500 0L30 3.800v22.400L21.500 30z" fill="#c490f5"/></svg><i class="absolute bottom-[5px] h-1 w-2 rounded-full bg-[#8b8080]"></i></div>
    <div class="relative flex w-[55px] items-center justify-center"><svg class="size-[30px]" viewBox="0 0 30 30"><rect x="0" y="4" width="30" height="22" rx="1.500" fill="url(#gterm)"/><path d="M0 8V5.500A1.500 1.500 0 0 1 1.500 4H10v4z" fill="#ccc"/><path d="M10 4h10v4H10z" fill="#999"/><path d="M20 4h8.500A1.500 1.500 0 0 1 30 5.500V8H20z" fill="#666"/><path d="M4.500 12l5 5-5 5" fill="none" stroke="#d0d0d0" stroke-width="2.600"/><path d="M13 21.700h10" stroke="#fff" stroke-width="2.400"/></svg><i class="absolute bottom-[5px] h-1 w-2 rounded-full bg-[#8b8080]"></i></div>
  </div>
  <div class="ml-auto flex items-center pr-[25px] pb-[2px] text-[15px] tracking-[-0.4px] text-[#1a1a1a]">
    <svg class="h-2 w-[14px]" viewBox="0 0 14 8"><path d="M1 7l6-6 6 6" fill="none" stroke="#1a1a1a" stroke-width="1.600"/></svg>
    <span class="ml-[27px]">ENG</span>
    <svg class="ml-[23px] h-[18px] w-5" viewBox="0 0 20 18"><g fill="none" stroke="#1a1a1a" stroke-width="1.500"><path d="M.7 7.200a13 13 0 0 1 18.600 0M3.600 10a9 9 0 0 1 12.800 0M6.400 12.800a5 5 0 0 1 7.200 0"/></g><circle cx="10" cy="15.200" r="1.700" fill="#1a1a1a"/></svg>
    <svg class="ml-[10px] h-[18px] w-5" viewBox="0 0 20 18"><path d="M1 6.500h3L8.500 2.500v13L4 11.500H1z" fill="none" stroke="#1a1a1a" stroke-width="1.300"/><path d="M11 6a4.500 4.500 0 0 1 0 6M13.500 3.800a8 8 0 0 1 0 10.400M16 1.500a11.500 11.500 0 0 1 0 15" fill="none" stroke="#1a1a1a" stroke-width="1.200"/></svg>
    <svg class="ml-[10px] h-[18px] w-[21px]" viewBox="0 0 21 18"><rect x="1.200" y="4.500" width="16.600" height="11" rx="2.500" fill="none" stroke="#1a1a1a" stroke-width="1.400"/><rect x="3.500" y="6.800" width="12" height="6.500" rx="1" fill="#1a1a1a"/><path d="M19 8v4h1.500V8z" fill="#1a1a1a"/><path d="M4.500 0L1 6.500h2.500L2 11l5-6H4.500L6.500 0z" fill="#1a1a1a" stroke="#e5dcdb" stroke-width=".6"/></svg>
    <div class="ml-[18px] w-[78px] pb-[2px] text-right leading-[20px]"><div>6:24 PM</div><div>11/26/2024</div></div>
    <div class="ml-[15px] flex size-5 items-center justify-center rounded-full bg-[#0067c0] text-[12px] text-white">3</div>
  </div>
 </div>
</div>

<script>
const tabs = [["yt"],["yt"],["gpt"],["docs"],["jobs"],["book"],["gmail"],["gmail"],["teams"],["globe","#5f6368"],["alert"],["gpt"],["notion"],["github"],["tri"],["gmail"],["linkedin"],["wave"],["gmail"],["gmail"],["swagger"],["gtr"],["pflag","#0ea856"],["pflag","#7b7b7b"],["pflag","#0ea856"],["gpt"],["notion"],["docs"],["chromebw"],["wa"],["spk"]];
document.getElementById("tabs").innerHTML = tabs.map(([id, c], i) =>
  `<div class="flex h-[50px] w-[50.03px] shrink-0 items-center pl-[14px]"><svg class="size-5"${c ? ` style="color:${c}"` : ""}><use href="#${id}"/></svg>${i < 30 ? '<span class="ml-[14px] h-5 w-[2px] rounded-full bg-[#b9c7fb]"></span>' : ""}</div>`).join("");
</script>
</body>
</html>
